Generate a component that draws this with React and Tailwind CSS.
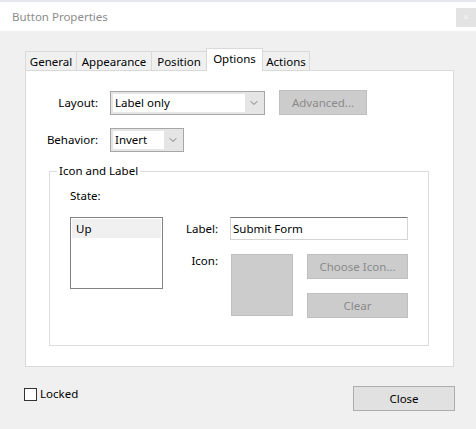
import { ChevronDown } from "lucide-react";

const font = { fontFamily: '"Noto Sans", "Open Sans", sans-serif' };

function Tab({ label, width, selected }) {
  if (selected) {
    return (
      <div
        className={`${width} h-[23px] -ml-px relative z-10 bg-white border border-b-0 border-[#d9d9d9] flex items-start justify-center pt-[2px]`}
      >
        {label}
      </div>
    );
  }
  return (
    <div
      className={`${width} h-[20px] -ml-px first:ml-0 border border-b-0 border-[#d9d9d9] flex items-center justify-center`}
    >
      {label}
    </div>
  );
}

function Combo({ value, width, innerWidth }) {
  return (
    <div
      className={`${width} h-[24px] border border-[#a6a6a6] bg-[#e5e5e5] flex p-[2px]`}
    >
      <div className={`${innerWidth} bg-white flex items-center pl-[2px]`}>
        {value}
      </div>
      <div className="flex-1 flex items-center justify-center text-[#555]">
        <ChevronDown size={12} strokeWidth={1.5} />
      </div>
    </div>
  );
}

function GrayButton({ children, className }) {
  return (
    <div
      className={`${className} bg-[#cccccc] border border-[#bfbfbf] text-[#8a8a8a] flex items-center justify-center`}
    >
      {children}
    </div>
  );
}

export default function App() {
  return (
    <div
      className="w-[476px] h-[429px] bg-[#f0f0f0] flex flex-col overflow-hidden text-[11.5px] text-black"
      style={font}
    >
      <div className="h-[2px] bg-[#e4e7ef]" />
      <div className="h-[29px] bg-white flex justify-between pl-[12px]">
        <span className="text-[#8c8c8c] leading-[29px]">Button Properties</span>
        <div className="w-[20px] h-[19px] mt-[6px] bg-[#e3e3e3] flex items-center justify-center text-[#f2f2f2] text-[11px]">
          ×
        </div>
      </div>

      <div className="flex-1 pl-[25px] pt-[18px] border-l-[3px] border-[#dcdcdc] -ml-[3px]">
        <div className="flex items-end h-[22px] -mb-px leading-[16px]">
          <Tab label="General" width="w-[52px]" />
          <Tab label="Appearance" width="w-[76px]" />
          <Tab label="Position" width="w-[56px]" />
          <Tab label="Options" width="w-[57px]" selected />
          <Tab label="Actions" width="w-[48px]" />
        </div>

        <div className="w-[429px] h-[297px] bg-white border border-[#d9d9d9] pt-[19px]">
          <div className="flex items-center">
            <div className="w-[72px] text-right">Layout:</div>
            <div className="ml-[12px]">
              <Combo value="Label only" width="w-[155px]" innerWidth="w-[132px]" />
            </div>
            <GrayButton className="ml-[14px] w-[88px] h-[25px]">
              Advanced...
            </GrayButton>
          </div>

          <div className="flex items-center mt-[13px]">
            <div className="w-[72px] text-right">Behavior:</div>
            <div className="ml-[12px]">
              <Combo value="Invert" width="w-[74px]" innerWidth="w-[51px]" />
            </div>
          </div>

          <fieldset className="ml-[23px] mt-[11px] w-[380px] h-[183px] border border-[#dcdcdc]">
            <legend className="ml-[7px] px-[2px] leading-[16px]">
              Icon and Label
            </legend>
            <div className="pl-[20px]">
              <div className="leading-[16px] mt-[9px]">State:</div>
              <div className="flex mt-[13px]">
                <div className="w-[93px] h-[72px] border border-[#828282] p-px">
                  <div className="h-[19px] bg-[#f0f0f0] pl-[4px] leading-[19px]">
                    Up
                  </div>
                </div>

                <div className="flex flex-col">
                  <div className="flex items-center">
                    <div className="w-[55px] text-right">Label:</div>
                    <div className="ml-[12px] w-[178px] h-[23px] border border-[#d4d4d4] border-t-[#7a7a7a] flex items-center pl-[2px]">
                      Submit Form
                    </div>
                  </div>
                  <div className="flex mt-[14px]">
                    <div className="w-[55px] text-right leading-[16px] -mt-px">
                      Icon:
                    </div>
                    <div className="ml-[13px] w-[62px] h-[62px] bg-[#cccccc] border border-[#bfbfbf]" />
                    <div className="ml-[14px] flex flex-col">
                      <GrayButton className="w-[101px] h-[25px]">
                        Choose Icon...
                      </GrayButton>
                      <GrayButton className="w-[101px] h-[25px] mt-[14px]">
                        Clear
                      </GrayButton>
                    </div>
                  </div>
                </div>
              </div>
            </div>
          </fieldset>
        </div>

        <div className="flex items-start w-[430px] mt-[19px]">
          <div className="flex items-center mt-[1px] -ml-px">
            <div className="w-[13px] h-[13px] border border-[#333] bg-white" />
            <span className="ml-[3px] leading-[14px]">Locked</span>
          </div>
          <div className="ml-auto w-[102px] h-[25px] bg-[#e1e1e1] border border-[#adadad] flex items-center justify-center">
            Close
          </div>
        </div>
      </div>
    </div>
  );
}
